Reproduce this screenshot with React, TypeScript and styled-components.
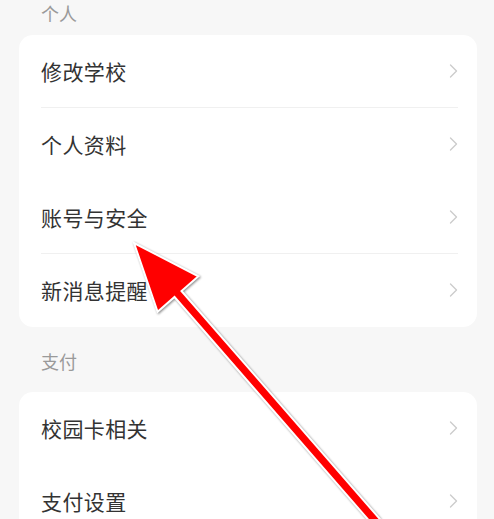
import React from "react";
import styled, { createGlobalStyle } from "styled-components";

const Global = createGlobalStyle`
  html, body { margin: 0; padding: 0; background: #f7f7f7; }
  body { font-family: "Noto Sans CJK SC", "Noto Sans", sans-serif; overflow: hidden; }
`;

const Page = styled.div`
  position: relative;
  width: 494px;
  height: 519px;
  padding: 0 17px 0 19px;
  box-sizing: border-box;
  background: #f7f7f7;
  overflow: hidden;
`;

const SectionTitle = styled.div<{ $height: number; $top: number }>`
  height: ${(p) => p.$height}px;
  padding: ${(p) => p.$top}px 0 0 22px;
  box-sizing: border-box;
  font-size: 18px;
  line-height: 20px;
  color: #9a9a9a;
`;

const Card = styled.div`
  background: #ffffff;
  border-radius: 14px;
  overflow: hidden;
`;

const Row = styled.div`
  height: 73px;
  padding: 0 19px 0 22px;
  box-sizing: border-box;
  display: flex;
`;

const RowInner = styled.div<{ $divider?: boolean }>`
  flex: 1;
  display: flex;
  align-items: center;
  justify-content: space-between;
  border-bottom: 1px solid ${(p) => (p.$divider ? "#f0f0f0" : "transparent")};
`;

const Label = styled.span`
  font-size: 21px;
  line-height: 24px;
  color: #333333;
  letter-spacing: 0.4px;
`;

const Chevron = () => (
  <svg width="9" height="14" viewBox="0 0 9 14" fill="none">
    <polyline points="1.5,1 7.5,7 1.5,13" stroke="#cccccc" strokeWidth="1.4" strokeLinecap="round" strokeLinejoin="round" />
  </svg>
);

const ArrowLayer = styled.svg`
  position: absolute;
  left: 0;
  top: 0;
  pointer-events: none;
  filter: drop-shadow(1px 1px 1px rgba(0, 0, 0, 0.45));
`;

type Item = { label: string; divider?: boolean };

const personal: Item[] = [
  { label: "修改学校", divider: true },
  { label: "个人资料" },
  { label: "账号与安全", divider: true },
  { label: "新消息提醒" },
];

const payment: Item[] = [{ label: "校园卡相关" }, { label: "支付设置" }];

const ListCard = ({ items }: { items: Item[] }) => (
  <Card>
    {items.map((it) => (
      <Row key={it.label}>
        <RowInner $divider={it.divider}>
          <Label>{it.label}</Label>
          <Chevron />
        </RowInner>
      </Row>
    ))}
  </Card>
);

export default function App() {
  // arrow geometry
  const tip = [134, 243];
  const base = [178, 294];
  const end = [392, 540];
  const n = [0.755, -0.656];
  const wing = 27;
  const hw = 4.6;
  const pt = (p: number[], k: number) => `${(p[0] + n[0] * k).toFixed(1)},${(p[1] + n[1] * k).toFixed(1)}`;
  const points = [
    `${tip[0]},${tip[1]}`,
    pt(base, wing),
    pt(base, hw),
    pt(end, hw),
    pt(end, -hw),
    pt(base, -hw),
    pt(base, -wing),
  ].join(" ");

  return (
    <>
      <Global />
      <Page>
        <SectionTitle $height={35} $top={3}>个人</SectionTitle>
        <ListCard items={personal} />
        <SectionTitle $height={65} $top={24}>支付</SectionTitle>
        <ListCard items={payment} />
        <ArrowLayer width="494" height="519" viewBox="0 0 494 519">
          <polygon points={points} fill="#ff0000" stroke="#ffffff" strokeWidth="2" strokeLinejoin="miter" />
        </ArrowLayer>
      </Page>
    </>
  );
}
